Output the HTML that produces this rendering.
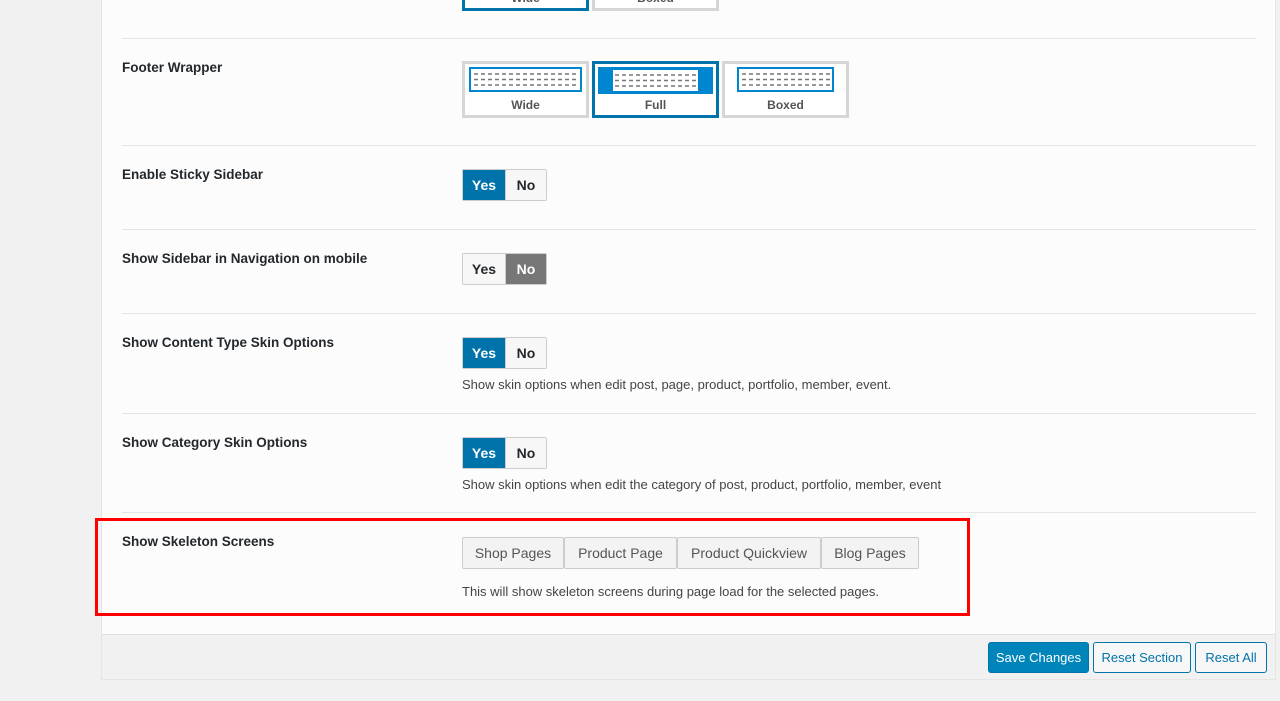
<!DOCTYPE html>
<html><head><style>
*{box-sizing:border-box;margin:0;padding:0}
body{width:1280px;height:701px;background:#f1f1f1;font-family:"Liberation Sans",sans-serif;font-size:13px;color:#23282d;position:relative;overflow:hidden}
.a{position:absolute}
.panel{left:101px;top:0;width:1175px;height:634px;background:#fcfcfc;border-left:1px solid #e5e5e5;border-right:1px solid #e5e5e5}
.foot{left:101px;top:634px;width:1175px;height:46px;background:#f1f1f1;border:1px solid #e5e5e5;border-top:1px solid #e0e0e0}
.sep{left:122px;width:1134px;height:1px;background:#e5e5e5}
.lbl{left:122px;font-weight:bold;font-size:13.5px;color:#23282d}
.img{width:127px;height:57px;border:3px solid #d6d6d6;background:#fff;text-align:center;font-size:12px;font-weight:bold;color:#555}
.img.sel{border-color:#0073aa}
.img .pv{margin:3px auto 0;height:25px;border:2px solid #0085d1}
.pv{position:relative}
.img .t{position:absolute;bottom:3px;left:0;right:0}
.tg{height:32px;display:flex;border:1px solid #ccc;border-radius:2px;font-weight:bold;font-size:14px}
.tg span{width:42px;line-height:30px;text-align:center;background:#f7f7f7;color:#23282d}
.tg span.on{background:#0073aa;color:#fff}
.tg span.off{background:#777;color:#fff}
.tg span+span{border-left:1px solid #ccc;width:41px}
.desc{left:462px;font-size:13px;color:#444}
.sk{top:537px;height:32px;border:1px solid #ccc;background:#f3f3f3;border-radius:2px;font-size:14px;color:#555;line-height:30px;text-align:center}
.btn{top:642px;height:31px;border:1px solid #0073aa;border-radius:3px;font-size:13px;line-height:29px;text-align:center;color:#0073aa;background:#f7f7f7}
</style></head><body>
<div class="a panel"></div>
<div class="a foot"></div>

<div class="a img sel" style="left:462px;top:-46px"><div class="t">Wide</div></div>
<div class="a img" style="left:592px;top:-46px"><div class="t">Boxed</div></div>
<div class="a sep" style="top:38px"></div>

<div class="a lbl" style="top:60px">Footer Wrapper</div>
<div class="a img" style="left:462px;top:61px"><div class="pv" style="width:113px;background:#fff"><svg width="109" height="21" style="display:block"><g stroke="#777" stroke-width="1.5" stroke-dasharray="4 3"><line x1="3" y1="5" x2="108" y2="5"/><line x1="3" y1="10.5" x2="108" y2="10.5"/><line x1="3" y1="16" x2="108" y2="16"/></g></svg></div><div class="t">Wide</div></div>
<div class="a img sel" style="left:592px;top:61px"><div class="pv" style="width:115px;margin-top:3px;background:#0085d1;border:none;height:27px;padding:3px 15px"><div style="background:#fff;height:21px"><svg width="85" height="21" style="display:block"><g stroke="#777" stroke-width="1.5" stroke-dasharray="4 3"><line x1="2" y1="5" x2="85" y2="5"/><line x1="2" y1="10.5" x2="85" y2="10.5"/><line x1="2" y1="16" x2="85" y2="16"/></g></svg></div></div><div class="t">Full</div></div>
<div class="a img" style="left:722px;top:61px"><div class="pv" style="width:97px;background:#fff"><svg width="93" height="21" style="display:block"><g stroke="#777" stroke-width="1.5" stroke-dasharray="4 3"><line x1="3" y1="5" x2="92" y2="5"/><line x1="3" y1="10.5" x2="92" y2="10.5"/><line x1="3" y1="16" x2="92" y2="16"/></g></svg></div><div class="t">Boxed</div></div>
<div class="a sep" style="top:145px"></div>

<div class="a lbl" style="top:167px">Enable Sticky Sidebar</div>
<div class="a tg" style="left:462px;top:169px"><span class="on">Yes</span><span>No</span></div>
<div class="a sep" style="top:229px"></div>

<div class="a lbl" style="top:251px">Show Sidebar in Navigation on mobile</div>
<div class="a tg" style="left:462px;top:253px"><span>Yes</span><span class="off">No</span></div>
<div class="a sep" style="top:313px"></div>

<div class="a lbl" style="top:335px">Show Content Type Skin Options</div>
<div class="a tg" style="left:462px;top:337px"><span class="on">Yes</span><span>No</span></div>
<div class="a desc" style="top:377px">Show skin options when edit post, page, product, portfolio, member, event.</div>
<div class="a sep" style="top:413px"></div>

<div class="a lbl" style="top:435px">Show Category Skin Options</div>
<div class="a tg" style="left:462px;top:437px"><span class="on">Yes</span><span>No</span></div>
<div class="a desc" style="top:477px">Show skin options when edit the category of post, product, portfolio, member, event</div>
<div class="a sep" style="top:512px"></div>

<div class="a lbl" style="top:534px">Show Skeleton Screens</div>
<div class="a sk" style="left:462px;width:102px">Shop Pages</div>
<div class="a sk" style="left:564px;width:113px">Product Page</div>
<div class="a sk" style="left:677px;width:144px">Product Quickview</div>
<div class="a sk" style="left:821px;width:98px">Blog Pages</div>
<div class="a desc" style="top:584px">This will show skeleton screens during page load for the selected pages.</div>
<div class="a" style="left:95px;top:518px;width:875px;height:98px;border:3px solid #f00"></div>

<div class="a btn" style="left:988px;width:101px;background:#0085ba;color:#fff;border-color:#0073aa">Save Changes</div>
<div class="a btn" style="left:1093px;width:98px">Reset Section</div>
<div class="a btn" style="left:1195px;width:72px">Reset All</div>
</body></html>
